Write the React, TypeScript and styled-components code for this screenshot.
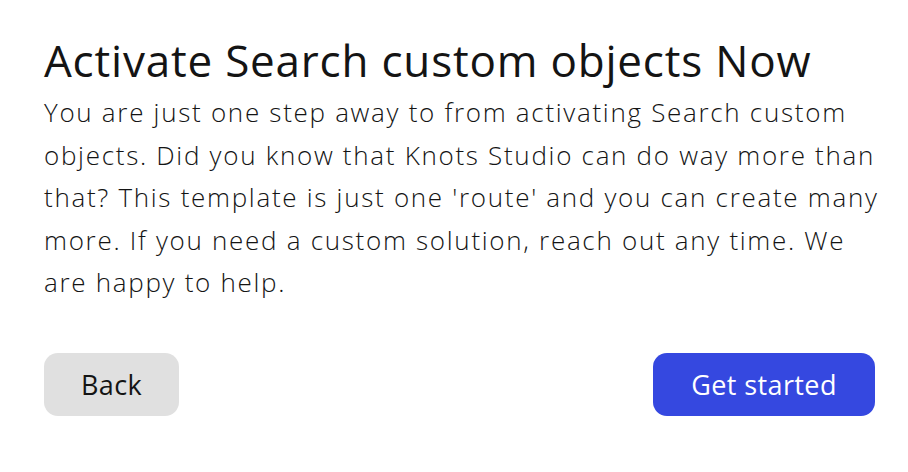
import React from "react";
import styled, { createGlobalStyle } from "styled-components";

const GlobalStyle = createGlobalStyle`
  html, body {
    margin: 0;
    padding: 0;
    background: #ffffff;
  }
  body {
    font-family: "Open Sans", "Lato", sans-serif;
    color: #141414;
  }
`;

const Card = styled.div`
  display: flex;
  flex-direction: column;
  width: 908px;
  height: 472px;
  box-sizing: border-box;
  padding: 32px 33px 0 44px;
`;

const Title = styled.h1`
  margin: 0;
  font-size: 44px;
  font-weight: 500;
  line-height: 56px;
  letter-spacing: 0.8px;
`;

const Body = styled.p`
  margin: 3px 0 0;
  width: 840px;
  font-size: 26px;
  font-weight: 300;
  line-height: 42.5px;
  letter-spacing: 1.7px;
`;

const Actions = styled.div`
  display: flex;
  justify-content: space-between;
  width: 831px;
  margin-top: 49px;
`;

const Button = styled.button<{ $primary?: boolean }>`
  width: ${(p) => (p.$primary ? "222px" : "135px")};
  height: 63px;
  padding: 0;
  border: none;
  border-radius: 14px;
  font-family: inherit;
  font-size: 27px;
  font-weight: 400;
  letter-spacing: 0.4px;
  cursor: pointer;
  background: ${(p) => (p.$primary ? "#3548e0" : "#e0e0e0")};
  color: ${(p) => (p.$primary ? "#ffffff" : "#141414")};
`;

const App = () => {
  return (
    <>
      <GlobalStyle />
      <Card>
        <Title>Activate Search custom objects Now</Title>
        <Body>
          You are just one step away to from activating Search custom objects.
          Did you know that Knots Studio can do way more than that? This
          template is just one 'route' and you can create many more. If you
          need a custom solution, reach out any time. We are happy to help.
        </Body>
        <Actions>
          <Button>Back</Button>
          <Button $primary>Get started</Button>
        </Actions>
      </Card>
    </>
  );
};

export default App;
